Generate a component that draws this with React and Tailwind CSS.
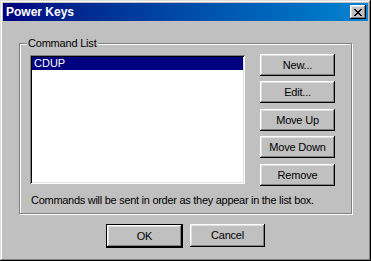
const raised =
  "shadow-[inset_-1px_-1px_#000,inset_1px_1px_#fff,inset_-2px_-2px_#808080,inset_2px_2px_#dfdfdf]"

const Btn = ({ children, className = "" }) => (
  <button
    type="button"
    className={`w-[75px] h-[22px] bg-[#c0c0c0] text-black text-[11px] leading-none tracking-[-0.2px] ${raised} ${className}`}
  >
    {children}
  </button>
)

const App = () => {
  const commands = ["CDUP"]

  return (
    <div className="w-[371px] h-[261px] bg-[#c0c0c0] p-[3px] flex flex-col font-['Liberation_Sans',Arial,sans-serif] shadow-[inset_-1px_-1px_#000,inset_1px_1px_#dfdfdf,inset_-2px_-2px_#808080,inset_2px_2px_#fff]">
      {/* title bar */}
      <div className="h-[18px] flex items-center justify-between pl-[3px] pr-[2px] bg-gradient-to-r from-[#000080] to-[#1084d0]">
        <span className="text-white font-bold text-[12px]">Power Keys</span>
        <button type="button" className={`w-[16px] h-[14px] bg-[#c0c0c0] flex items-center justify-center ${raised}`}>
          <svg width="8" height="7" viewBox="0 0 8 7" shapeRendering="crispEdges">
            <path d="M0 0h2v1H0zM6 0h2v1H6zM1 1h2v1H1zM5 1h2v1H5zM2 2h4v1H2zM3 3h2v1H3zM2 4h4v1H2zM1 5h2v1H1zM5 5h2v1H5zM0 6h2v1H0zM6 6h2v1H6z" fill="#000" />
          </svg>
        </button>
      </div>

      {/* command list group */}
      <div className="relative mt-[22px] ml-[16px] mr-[16px] h-[171px] border border-[#808080] shadow-[inset_1px_1px_#fff,1px_1px_#fff]">
        <span className="absolute left-[7px] -top-[7px] px-[1px] bg-[#c0c0c0] text-[11px] leading-[13px] tracking-[-0.2px] text-black">
          Command List
        </span>
        <div className="flex pt-[11px] pl-[10px] pr-[16px]">
          <div className="w-[215px] h-[129px] bg-white p-[2px] shadow-[inset_1px_1px_#808080,inset_-1px_-1px_#fff,inset_2px_2px_#000,inset_-2px_-2px_#dfdfdf]">
            {commands.map(c => (
              <div key={c} className="h-[13px] bg-[#000080] text-white text-[11px] leading-[13px] pl-[2px]">
                {c}
              </div>
            ))}
          </div>
          <div className="ml-auto flex flex-col -mt-[1px]">
            <Btn>New...</Btn>
            <Btn className="mt-[5px]">Edit...</Btn>
            <Btn className="mt-[6px]">Move Up</Btn>
            <Btn className="mt-[5px]">Move Down</Btn>
            <Btn className="mt-[6px]">Remove</Btn>
          </div>
        </div>
        <p className="pl-[11px] mt-[8px] text-[11px] leading-[13px] tracking-[-0.28px] text-black">
          Commands will be sent in order as they appear in the list box.
        </p>
      </div>

      {/* dialog buttons */}
      <div className="flex justify-center gap-[7px] mt-[10px]">
        <div className="border border-black">
          <Btn className="block h-[21px] w-[73px]">OK</Btn>
        </div>
        <Btn className="h-[23px]">Cancel</Btn>
      </div>
    </div>
  )
}

export default App
